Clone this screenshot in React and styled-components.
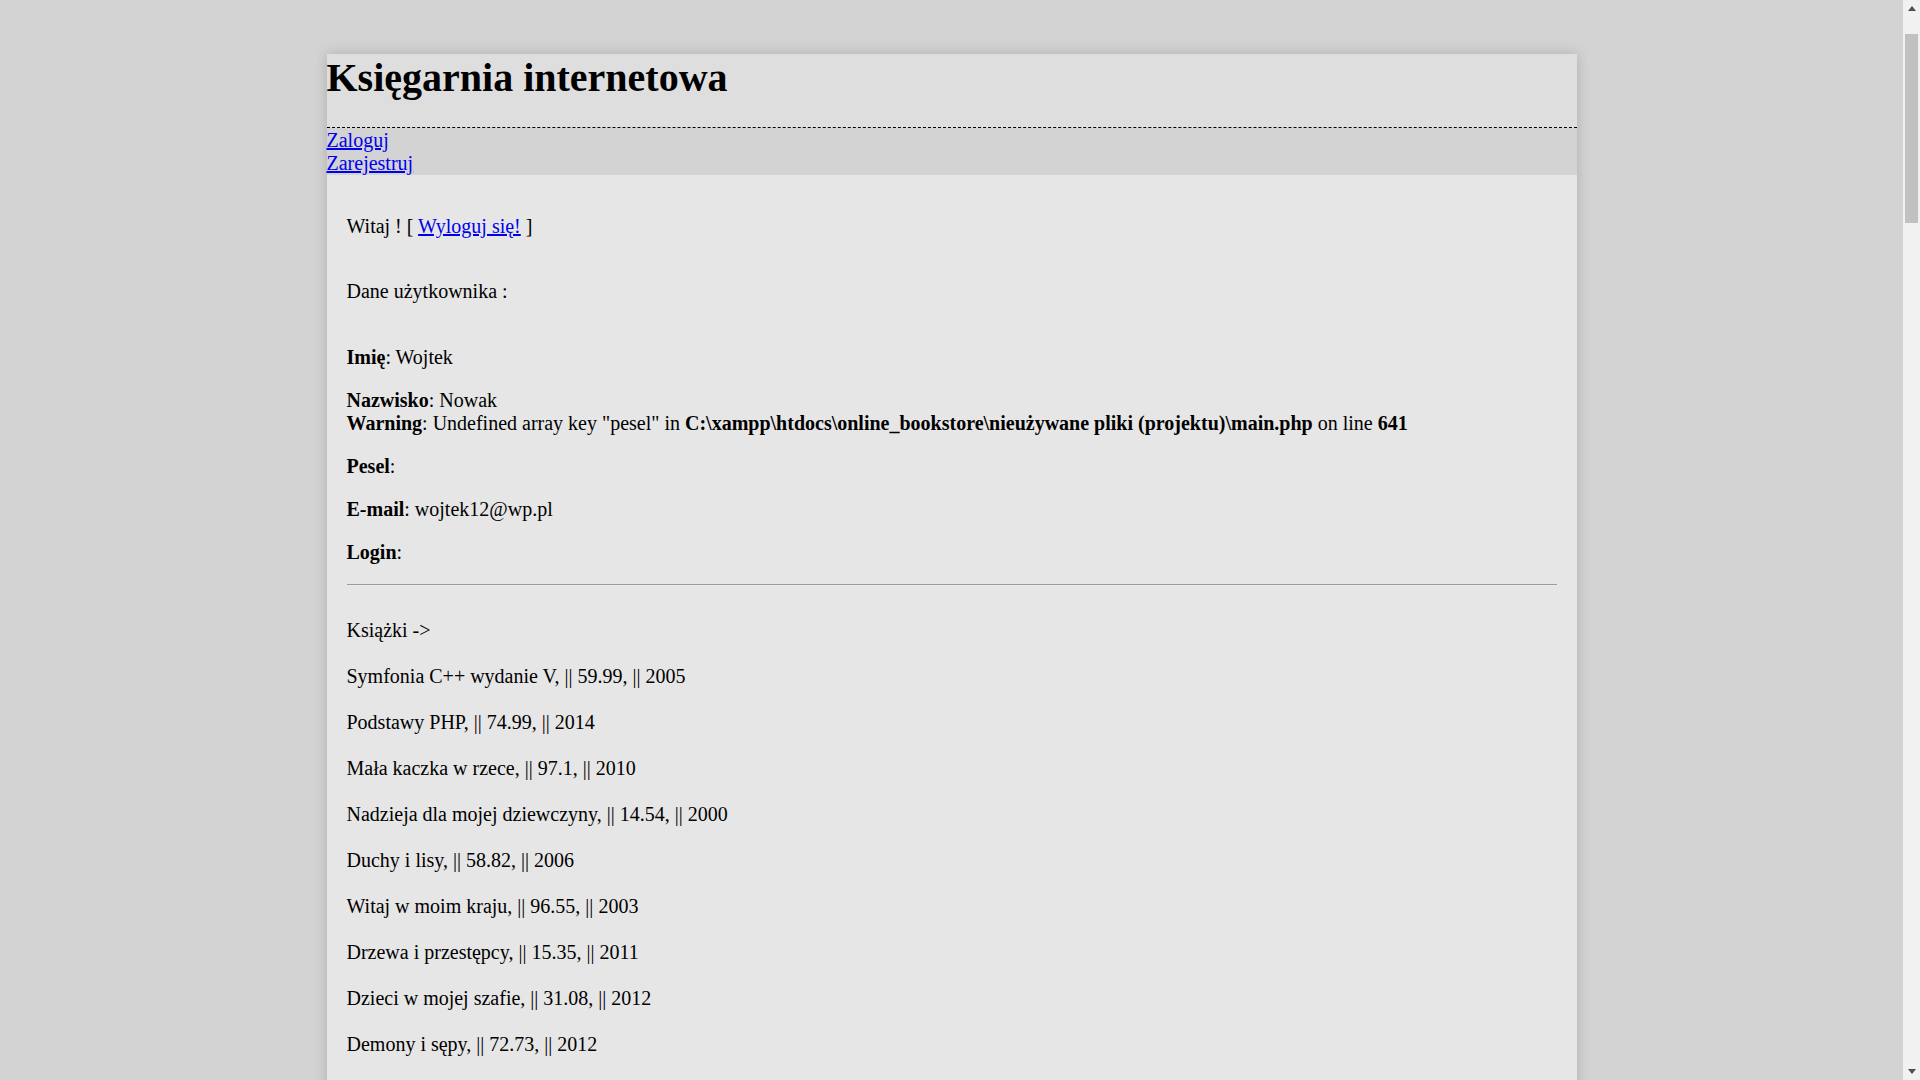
import React from "react";
import styled, { createGlobalStyle } from "styled-components";

const GlobalStyle = createGlobalStyle`
  html, body {
    margin: 0;
    padding: 0;
    background: #d3d3d3;
    font-family: "Liberation Serif", "Times New Roman", serif;
    font-size: 20px;
    line-height: 23px;
    color: #000;
  }
  a {
    color: #0000ee;
    text-decoration: underline;
  }
`;

// page width minus the 17px scrollbar, like in the browser
const Page = styled.div`
  padding: 54px 17px 0 0;
`;

const Container = styled.div`
  width: 1250px;
  margin: 0 auto;
  background: #e6e6e6;
  box-shadow: 0 0 12px rgba(0, 0, 0, 0.18);
`;

const Header = styled.header`
  background: #dedede;
  border-bottom: 1px dashed #000;
`;

const Title = styled.h1`
  margin: 0;
  padding: 1px 0 26px;
  font-size: 40px;
  line-height: 46px;
  font-weight: bold;
`;

const Nav = styled.nav`
  background: #d3d3d3;
  padding-top: 1px;
  display: flex;
  flex-direction: column;
  align-items: flex-start;
`;

const Content = styled.main`
  display: flex;
  flex-direction: column;
  align-items: stretch;
  padding: 20px 20px 80px;
`;

const Line = styled.p`
  margin: ${({ $gap }) => $gap ?? 20}px 0 0;
`;

const Rule = styled.hr`
  margin: 20px 0 33px;
  height: 0;
  border: none;
  border-top: 1px solid #9a9a9a;
  border-bottom: 1px solid #eeeeee;
`;

const Book = styled.p`
  margin: 23px 0 0;
`;

const Scrollbar = styled.div`
  position: fixed;
  top: 0;
  right: 0;
  width: 17px;
  height: 100vh;
  background: #f1f1f1;
  display: flex;
  flex-direction: column;
  align-items: center;
`;

const Arrow = styled.div`
  height: 17px;
  width: 17px;
  display: flex;
  align-items: center;
  justify-content: center;
  flex-shrink: 0;
`;

const Track = styled.div`
  flex: 1;
  display: flex;
  flex-direction: column;
  align-items: center;
  padding-top: 17px;
`;

const Thumb = styled.div`
  width: 13px;
  height: 189px;
  background: #c1c1c1;
`;

const Triangle = ({ down }) => (
  <svg width="8" height="5" viewBox="0 0 8 5">
    <polygon
      points={down ? "0,0 8,0 4,5" : "4,0 8,5 0,5"}
      fill="#505050"
    />
  </svg>
);

const books = [
  ["Symfonia C++ wydanie V", "59.99", "2005"],
  ["Podstawy PHP", "74.99", "2014"],
  ["Mała kaczka w rzece", "97.1", "2010"],
  ["Nadzieja dla mojej dziewczyny", "14.54", "2000"],
  ["Duchy i lisy", "58.82", "2006"],
  ["Witaj w moim kraju", "96.55", "2003"],
  ["Drzewa i przestępcy", "15.35", "2011"],
  ["Dzieci w mojej szafie", "31.08", "2012"],
  ["Demony i sępy", "72.73", "2012"],
];

const App = () => {
  return (
    <>
      <GlobalStyle />
      <Page>
        <Container>
          <Header>
            <Title>Księgarnia internetowa</Title>
          </Header>
          <Nav>
            <a href="#">Zaloguj</a>
            <a href="#">Zarejestruj</a>
          </Nav>
          <Content>
            <Line>
              Witaj ! [ <a href="#">Wyloguj się!</a> ]
            </Line>
            <Line $gap={42}>Dane użytkownika :</Line>
            <Line $gap={43}>
              <b>Imię</b>: Wojtek
            </Line>
            <Line>
              <b>Nazwisko</b>: Nowak
              <br />
              <b>Warning</b>: Undefined array key "pesel" in{" "}
              <b>C:\xampp\htdocs\online_bookstore\nieużywane pliki (projektu)\main.php</b>{" "}
              on line <b>641</b>
            </Line>
            <Line>
              <b>Pesel</b>:
            </Line>
            <Line>
              <b>E-mail</b>: wojtek12@wp.pl
            </Line>
            <Line>
              <b>Login</b>:
            </Line>
            <Rule />
            <Line $gap={0}>Książki -&gt;</Line>
            {books.map(([name, price, year]) => (
              <Book key={name}>
                {name}, || {price}, || {year}
              </Book>
            ))}
          </Content>
        </Container>
      </Page>
      <Scrollbar>
        <Arrow>
          <Triangle />
        </Arrow>
        <Track>
          <Thumb />
        </Track>
        <Arrow>
          <Triangle down />
        </Arrow>
      </Scrollbar>
    </>
  );
};

export default App;
